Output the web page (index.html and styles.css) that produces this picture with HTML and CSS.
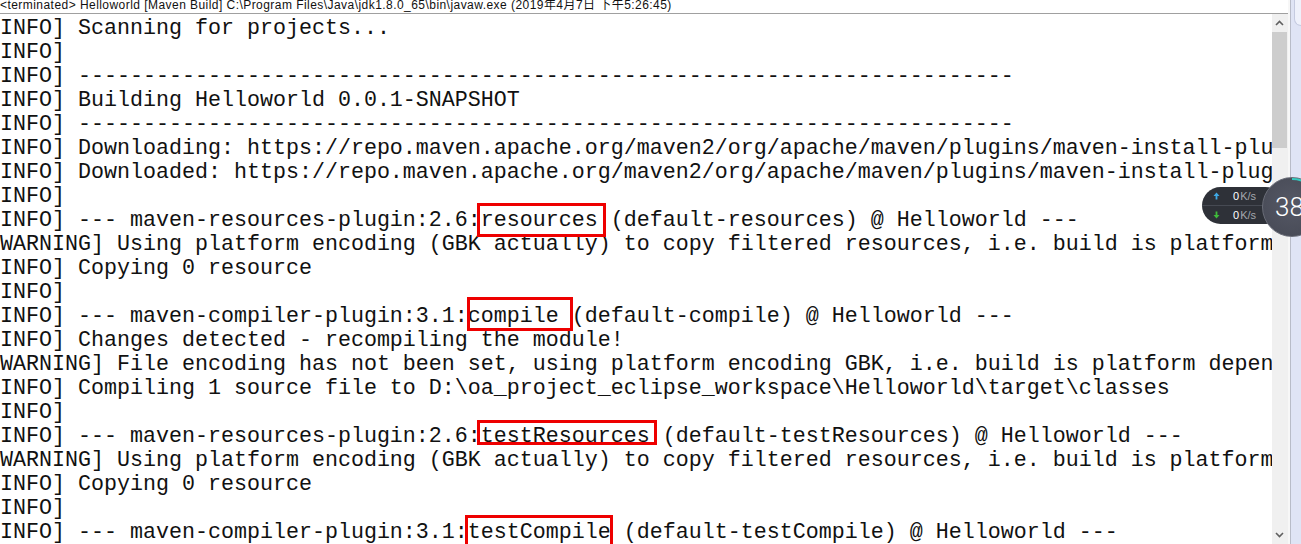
FILE: index.html
```html
<!DOCTYPE html>
<html>
<head>
<meta charset="utf-8">
<title>Console</title>
<link rel="stylesheet" href="styles.css">
</head>
<body>
<div class="app">
  <div class="main">
    <div class="title">&lt;terminated&gt; Helloworld [Maven Build] C:\Program Files\Java\jdk1.8.0_65\bin\javaw.exe (2019年4月7日 下午5:26:45)</div>
    <div class="console">
      <div class="output"><pre class="log">[INFO] Scanning for projects...
[INFO]
[INFO] ------------------------------------------------------------------------
[INFO] Building Helloworld 0.0.1-SNAPSHOT
[INFO] ------------------------------------------------------------------------
[INFO] Downloading: https://repo.maven.apache.org/maven2/org/apache/maven/plugins/maven-install-plugin/2.4/maven-install-plugin-2.4.pom
[INFO] Downloaded: https://repo.maven.apache.org/maven2/org/apache/maven/plugins/maven-install-plugin/2.4/maven-install-plugin-2.4.pom
[INFO]
[INFO] --- maven-resources-plugin:2.6:<span class="mark mark-res">resources</span> (default-resources) @ Helloworld ---
[WARNING] Using platform encoding (GBK actually) to copy filtered resources, i.e. build is platform dependent!
[INFO] Copying 0 resource
[INFO]
[INFO] --- maven-compiler-plugin:3.1:<span class="mark mark-comp">compile</span> (default-compile) @ Helloworld ---
[INFO] Changes detected - recompiling the module!
[WARNING] File encoding has not been set, using platform encoding GBK, i.e. build is platform dependent!
[INFO] Compiling 1 source file to D:\oa_project_eclipse_workspace\Helloworld\target\classes
[INFO]
[INFO] --- maven-resources-plugin:2.6:<span class="mark mark-tres">testResources</span> (default-testResources) @ Helloworld ---
[WARNING] Using platform encoding (GBK actually) to copy filtered resources, i.e. build is platform dependent!
[INFO] Copying 0 resource
[INFO]
[INFO] --- maven-compiler-plugin:3.1:<span class="mark mark-tcomp">testCompile</span> (default-testCompile) @ Helloworld ---
[INFO]</pre></div>
      <div class="vscroll">
        <div class="sb-btn">
          <svg width="9" height="6" viewBox="0 0 9 6"><path d="M1 5 L4.5 1.5 L8 5" fill="none" stroke="#606060" stroke-width="1.6"/></svg>
        </div>
        <div class="sb-track"><div class="sb-thumb"></div></div>
        <div class="sb-btn sb-btn-down">
          <svg width="9" height="6" viewBox="0 0 9 6"><path d="M1 1 L4.5 4.5 L8 1" fill="none" stroke="#606060" stroke-width="1.6"/></svg>
        </div>
      </div>
    </div>
  </div>
  <div class="side"><div class="side-panel"><div class="side-card"></div></div></div>
</div>

<div class="netmon">
  <div class="pill">
    <div class="nm-row nm-row-top">
      <svg class="nm-arrow" width="7" height="8" viewBox="0 0 7 8"><path d="M3.5 0.5 L6.5 4 L4.4 4 L4.4 7.5 L2.6 7.5 L2.6 4 L0.5 4 Z" fill="#3fa9e6"/></svg>
      <span class="nm-val"><span class="nm-num">0</span>K/s</span>
    </div>
    <div class="nm-row">
      <svg class="nm-arrow" width="7" height="8" viewBox="0 0 7 8"><path d="M3.5 7.5 L6.5 4 L4.4 4 L4.4 0.5 L2.6 0.5 L2.6 4 L0.5 4 Z" fill="#3fbb3a"/></svg>
      <span class="nm-val"><span class="nm-num">0</span>K/s</span>
    </div>
  </div>
  <div class="gauge">
    <svg class="gauge-arc" width="60" height="60" viewBox="0 0 60 60"><path d="M30 2 A28 28 0 0 1 52 12.7" fill="none" stroke="#35c9bf" stroke-width="2"/></svg>
    <span class="gauge-num">38</span>
  </div>
</div>
</body>
</html>
```

FILE: styles.css
```css
html, body {
  margin: 0;
  padding: 0;
}

body {
  width: 1301px;
  height: 544px;
  overflow: hidden;
  background: #ffffff;
  position: relative;
}

.app {
  display: flex;
  width: 1301px;
  height: 544px;
}

.main {
  width: 1288px;
  display: flex;
  flex-direction: column;
}

.title {
  height: 13px;
  line-height: 11px;
  font-family: "Liberation Sans", "Noto Sans CJK SC", sans-serif;
  font-size: 12px;
  letter-spacing: 0.45px;
  color: #111;
  white-space: nowrap;
  overflow: hidden;
  border-bottom: 1px solid #a0a0a0;
}

.console {
  flex: 1;
  display: flex;
  min-height: 0;
}

.output {
  width: 1272px;
  overflow: hidden;
  padding-top: 2.5px;
}

.log {
  margin: 0 0 0 -13px;
  font-family: "Liberation Mono", monospace;
  font-size: 21.67px;
  line-height: 24px;
  color: #111;
  white-space: pre;
}

.mark {
  position: relative;
}

.mark::after {
  content: "";
  position: absolute;
  border: 3px solid #ee0000;
}

.mark-res::after {
  left: -4px;
  right: -8px;
  top: -5px;
  bottom: -4px;
}

.mark-comp::after {
  left: -1px;
  right: -14px;
  top: -7px;
  bottom: -2px;
}

.mark-tres::after {
  left: -4px;
  right: -7px;
  top: -4px;
  bottom: 4px;
}

.mark-tcomp::after {
  left: -3px;
  right: -2px;
  top: -5px;
  bottom: -2px;
}

.vscroll {
  width: 16px;
  background: #f0f0f0;
  display: flex;
  flex-direction: column;
}

.sb-btn {
  height: 18px;
  display: flex;
  align-items: center;
  justify-content: center;
  padding-right: 1px;
}

.sb-btn-down {
  margin-top: auto;
}

.sb-track {
  flex: 1;
}

.sb-thumb {
  height: 116px;
  width: 15px;
  background: #cdcdcd;
}

.side {
  width: 13px;
  display: flex;
  background: #f7f7f7;
  padding-left: 2px;
}

.side-panel {
  flex: 1;
  border-left: 1px solid #b8bcc8;
  background: #dfe4f5;
  padding: 0 0 0 3px;
}

.side-card {
  height: 25px;
  border-left: 1px solid #c5cbe0;
  border-bottom: 1px solid #c5cbe0;
  border-bottom-left-radius: 8px;
  background: #eef1fb;
}

/* floating network monitor */
.netmon {
  position: absolute;
  left: 1202px;
  top: 177px;
  width: 120px;
  height: 62px;
}

.pill {
  position: absolute;
  left: 0;
  top: 10px;
  width: 82px;
  height: 37px;
  border-radius: 18.5px;
  background: #2e3138;
  display: flex;
  flex-direction: column;
}

.nm-row {
  height: 18px;
  display: flex;
  align-items: center;
  padding-left: 11px;
}

.nm-row-top {
  border-bottom: 1px solid #464a53;
}

.nm-arrow {
  display: block;
}

.nm-val {
  margin-left: 13px;
  font-family: "Liberation Sans", sans-serif;
  font-size: 11px;
  color: #a4a7ae;
}

.nm-num {
  color: #ffffff;
  margin-right: 1px;
}

.gauge {
  position: absolute;
  left: 60px;
  top: 0;
  width: 60px;
  height: 60px;
  box-sizing: border-box;
  border-radius: 50%;
  background: radial-gradient(circle at 50% 45%, #555865 0%, #4a4d59 70%, #41444f 100%);
  border: 1px solid #6a6d78;
  display: flex;
  align-items: center;
}

.gauge-arc {
  position: absolute;
  left: -1px;
  top: -1px;
}

.gauge-num {
  margin-left: 12px;
  font-family: Roboto, "Liberation Sans", sans-serif;
  font-weight: 300;
  font-size: 26px;
  color: #ffffff;
  line-height: 1;
}
```
